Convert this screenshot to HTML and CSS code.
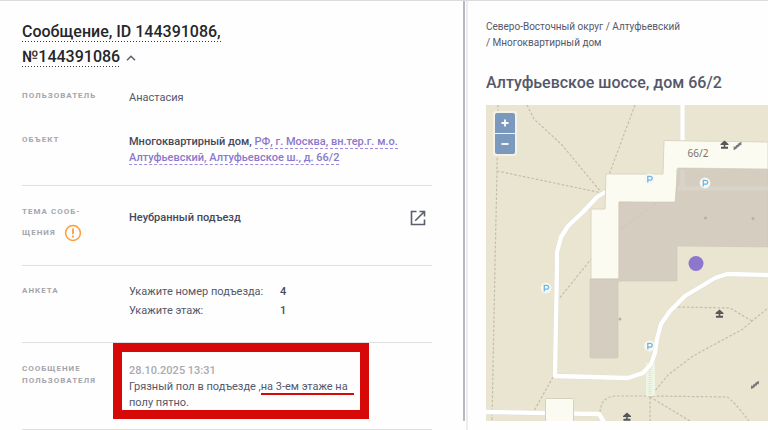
FILE: index.html
```html
<!DOCTYPE html>
<html lang="ru">
<head>
<meta charset="utf-8">
<meta name="viewport" content="width=device-width, initial-scale=1">
<title>Сообщение</title>
<link rel="stylesheet" href="styles.css">
</head>
<body>
<div class="layout">
  <main class="message">
    <div class="title-row">
      <h1 class="title"><a class="title-link" href="#">Сообщение, ID 144391086,<br>№144391086</a>
        <button class="icon-button collapse" type="button" aria-label="Свернуть"><svg width="10" height="6" viewBox="0 0 10 6"><path d="M1 5.2 5 1.2l4 4" fill="none" stroke="currentColor" stroke-width="1.5"/></svg></button>
      </h1>
    </div>
    <section class="row row-user">
      <h2 class="label">Пользователь</h2>
      <p class="value">Анастасия</p>
    </section>
    <section class="row row-object">
      <h2 class="label">Объект</h2>
      <p class="value strong">Многоквартирный дом, <a class="address" href="#">РФ, г. Москва, вн.тер.г. м.о.<br>Алтуфьевский, Алтуфьевское ш., д. 66/2</a></p>
    </section>
    <section class="row row-topic">
      <h2 class="label">Тема сооб-<br>щения <svg class="warning" width="18" height="18" viewBox="0 0 18 18"><circle cx="9" cy="9" r="7.4" fill="none" stroke="#ff9c35" stroke-width="1.5"/><path d="M9 4.6v5.6M9 11.6v1.8" stroke="#ff9c35" stroke-width="1.8"/></svg></h2>
      <div class="value topic strong"><span>Неубранный подъезд</span>
        <button class="icon-button" type="button" aria-label="Открыть"><svg width="16" height="16" viewBox="0 0 16 16" fill="none" stroke="currentColor" stroke-width="1.6"><path d="M6.5 1.5h-5v13h13v-5M9.5 1.5h5v5M14.2 1.8 5.2 10.8"/></svg></button>
      </div>
    </section>
    <section class="row row-form">
      <h2 class="label">Анкета</h2>
      <dl class="value answers">
        <dt>Укажите номер подъезда:</dt><dd>4</dd>
        <dt>Укажите этаж:</dt><dd>1</dd>
      </dl>
    </section>
    <section class="row row-text">
      <h2 class="label">Сообщение пользователя</h2>
      <div class="value">
        <time class="date" datetime="2025-10-28T13:31">28.10.2025 13:31</time>
        <p class="text">Грязный пол в подъезде ,<span class="marked">на 3-ем этаже на</span><br>полу пятно.</p>
      </div>
      <div class="frame"></div>
    </section>
  </main>
  <div class="scroll"><div class="thumb"></div></div>
  <aside class="place">
    <nav class="crumbs"><a href="#">Северо-Восточный округ</a> / <a href="#">Алтуфьевский</a><br>/ <a href="#">Многоквартирный дом</a></nav>
    <h2 class="place-title">Алтуфьевское шоссе, дом 66/2</h2>
    <div class="map">
      <svg class="map-canvas" viewBox="486 105 282 316" preserveAspectRatio="xMinYMin slice" role="img" aria-label="Карта">
        <defs>
          <g id="parking"><circle r="5.4" fill="#f7f8f2"/><path d="M-1.7 3.4v-6h2.2q2.2 0 2.2 1.9T.5 1.2h-2.2" fill="none" stroke="#6eb6e2" stroke-width="1.3"/></g>
          <g id="shelter" fill="#57575b"><path d="M0-4.4 4-1v1H-4v-1zM-.8 0h1.6v2h-1.6zM-3.5 1.8h7v2h-7z"/></g>
          <g id="bench" stroke="#77777a" fill="none"><path d="M-3 2.8 3-2.8" stroke-width="2"/><path d="M-3.3.6v3.4M-1 -.8v3M1.2-2.6v3M3.3-4v3.2" stroke-width="1.2"/></g>
        </defs>
        <rect x="486" y="105" width="282" height="316" fill="#eae5d1"/>
        <g fill="none" stroke="#c3bdab" stroke-width="1.2" stroke-dasharray="2.6 1.8">
          <path d="M498 105 497 171 495 265 492 421M527 105l7 14 28 26 39 47M497 171l105 22M635 105l-25 67-5 18M592 258l-34 42M553 377l-19 34"/>
          <path d="M600 412q1-15 15-16h35l77 1q6 3 22 24M650 397v24M650 397l40 24M650 397l18-22 25-19 50-27 9-8 16-13M678 307l52 1 22 13"/>
        </g>
        <path d="M646 363h9v33h-9z" fill="#eef5e4"/><path d="M650 365v30" stroke="#dde5d3" stroke-width="3" stroke-dasharray="1 1"/>
        <g fill="none" stroke-linejoin="round">
          <path d="M607 191l-10 6-14 15-15 14-7 11-4 15v13l-2 111 73 2 15-5 8-9 4-11 2-14 4-15 9-13 15-15 30-18 12-4 41 1M486 412l113 2 5 8M682.500 105v38" stroke="#deddd3" stroke-width="5"/>
          <path d="M607 191l-10 6-14 15-15 14-7 11-4 15v13l-2 111 73 2 15-5 8-9 4-11 2-14 4-15 9-13 15-15 30-18 12-4 41 1M486 412l113 2 5 8M682.500 105v38" stroke="#fff" stroke-width="4.300"/>
        </g>
        <path d="M664 140.500l104 1.500v28l-91-1-1 34-57-1v77h-28v-70h14l1-35h57z" fill="#fbfbf2" stroke="#dad6c3" stroke-width="1"/>
        <path d="M678 168l90 1v78l-91-1v35h-57l-2 1v75l-1 1h-26l-1-1v-78h29v-77h56z" fill="#d5cdbf" stroke="#cec7b8" stroke-width=".6" stroke-linejoin="round"/>
        <path d="M678 188.500h90M682.500 170v18" fill="none" stroke="#d9d4c9" stroke-width="4"/>
        <path d="M621 229l36-26" stroke="#cac0ae" stroke-width=".7" stroke-dasharray="3 2"/>
        <rect x="545.500" y="398.500" width="28" height="30" rx="1" fill="#fbfbf2" stroke="#d6d1be"/>
        <g fill="#b8b0a4"><circle cx="705.500" cy="218" r="1.500"/><circle cx="753" cy="218.500" r="1.500"/><circle cx="620" cy="319" r="1.500"/></g>
        <use href="#parking" x="649.500" y="179"/><use href="#parking" x="705" y="183"/><use href="#parking" x="546" y="288"/><use href="#parking" x="649.500" y="346"/>
        <use href="#shelter" x="724.500" y="145"/><use href="#shelter" x="719.500" y="314"/><use href="#shelter" x="627" y="417"/>
        <use href="#bench" x="737.500" y="146"/><use href="#bench" x="755" y="385"/>
        <text class="house" x="687.500" y="157">66/2</text>
        <circle cx="696" cy="263.500" r="7.500" fill="#8b78cd"/>
      </svg>
      <div class="zoom">
        <button class="zoom-button" type="button" aria-label="Приблизить"><svg width="8" height="8" viewBox="0 0 8 8"><path d="M4 .5v7M.5 4h7" stroke="#fff" stroke-width="1.8"/></svg></button>
        <button class="zoom-button" type="button" aria-label="Отдалить"><svg width="8" height="8" viewBox="0 0 8 8"><path d="M.5 4h7" stroke="#fff" stroke-width="1.8"/></svg></button>
      </div>
    </div>
  </aside>
</div>
</body>
</html>
```
FILE: styles.css
```css
* { box-sizing: border-box; }
html { height: 100%; }
body {
  margin: 0;
  height: 100%;
  overflow: hidden;
  background: #fefefe;
  color: #55586a;
  font: 11px/16px Roboto, "Liberation Sans", sans-serif;
}
h1, h2, p, dl, dd { margin: 0; }
a { color: inherit; text-decoration: none; }
button { padding: 0; border: 0; background: none; cursor: pointer; }
svg { display: block; }

.layout {
  display: grid;
  grid-template-columns: 463fr 5px 300fr;
  height: 100%;
  border-top: 1px solid #dcdcde;
}
.message { padding: 18px 31px 0 22px; }

.title { color: #25262a; font-size: 16px; font-weight: 500; line-height: 25px; }
.title-link {
  padding-bottom: 1px;
  background: repeating-linear-gradient(90deg, #3c3d42 0 1px, transparent 1px 3px) left bottom / 100% 1px no-repeat;
  -webkit-box-decoration-break: clone;
  box-decoration-break: clone;
}
.icon-button { color: #5b5e6c; }
.collapse { display: inline-block; margin-left: 2px; vertical-align: 1px; }

.row {
  display: grid;
  grid-template-columns: 79px 1fr;
  column-gap: 28px;
  border-bottom: 1px solid #dfdfe2;
}
.row-user { padding: 21px 0 14px; border-bottom: 0; }
.row-object { padding: 14px 0 19px; }
.row-topic { padding: 15px 0 22px; }
.row-form { padding: 18px 0 23px; }
.row-text { position: relative; padding: 20px 0 18px; }

.label {
  color: #a4a5ac;
  font-size: 8px;
  font-weight: 700;
  line-height: 12px;
  letter-spacing: 1px;
  text-transform: uppercase;
  white-space: nowrap;
}
.row-text .label { white-space: normal; }
.row-topic .label { line-height: 21px; }
.row-form .label { line-height: 14px; }
.warning { display: inline-block; margin-left: 5px; vertical-align: middle; }
.strong { color: #45485a; font-weight: 500; }
.address { color: #8b78cd; border-bottom: 1px dashed #9c8bdc; }
.topic { display: flex; align-items: center; align-self: start; justify-content: space-between; min-height: 34px; padding-right: 6px; }
.answers { display: grid; grid-template-columns: 151px 1fr; row-gap: 3px; }
.answers dd { color: #45485a; font-weight: 500; }
.date { display: block; color: #a9aab0; font-weight: 500; }
.marked { position: relative; }
.marked::after {
  content: "";
  position: absolute;
  left: 0;
  right: -6px;
  bottom: -2px;
  height: 2px;
  background: #d60808;
}
.frame {
  position: absolute;
  inset: 0 63px 10px 91px;
  border: 9px solid #d60808;
  pointer-events: none;
}

.scroll { border-right: 2px solid #ededf0; }
.thumb { width: 2px; height: 420px; background: #b8b8c0; }

.place { padding: 18px 0 0 18px; min-width: 0; }
.crumbs { font-size: 10px; }
.place-title { margin: 20px 0 10px; font-size: 16px; font-weight: 500; line-height: 24px; }
.map { position: relative; height: 316px; overflow: hidden; }
.map-canvas { width: 100%; height: 100%; }
.house { fill: #77736d; font: 10px "Noto Sans", sans-serif; }
.zoom {
  position: absolute;
  top: 6px;
  left: 7px;
  display: grid;
  gap: 1px;
  padding: 2px;
  border-radius: 3px;
  background: #f3f1e8;
}
.zoom-button { display: grid; place-items: center; width: 20px; height: 20px; background: #7b98bd; }
.zoom-button:first-child { border-radius: 2px 2px 0 0; }
.zoom-button:last-child { border-radius: 0 0 2px 2px; }
```
